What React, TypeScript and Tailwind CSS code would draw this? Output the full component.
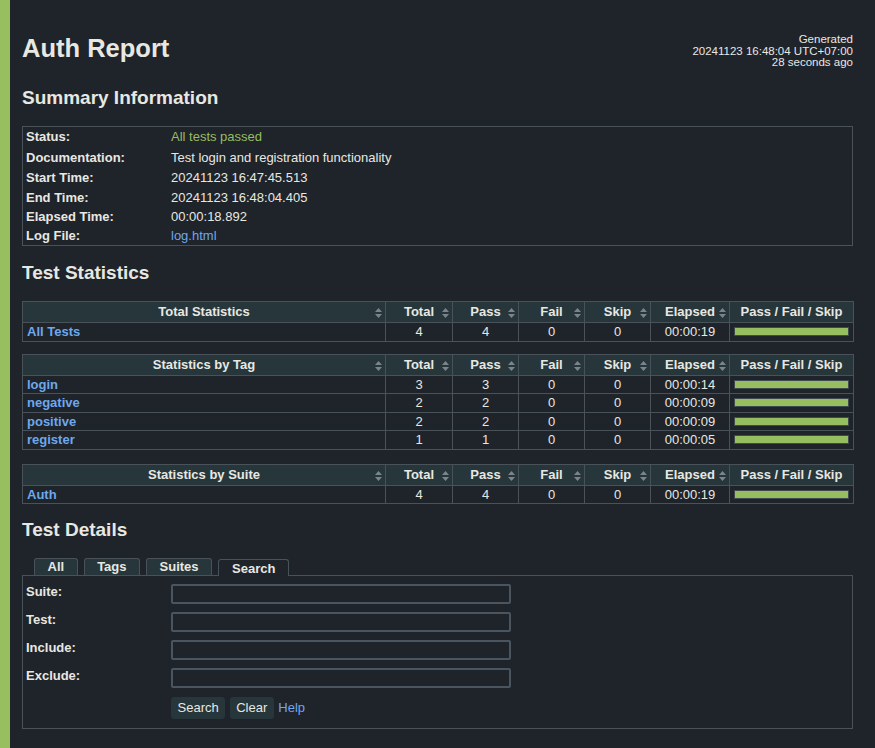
import React from 'react';

type Row = { name: string; total: number; pass: number; fail: number; skip: number; elapsed: string };

const SortIcon = () => (
  <svg width="7" height="10" viewBox="0 0 7 10" className="absolute right-[3px] top-[6px]">
    <path d="M0 4 L3.5 0 L7 4 Z" fill="#7b848c" />
    <path d="M0 6 L7 6 L3.5 10 Z" fill="#7b848c" />
  </svg>
);

const StatTable = ({ title, rows, className }: { title: string; rows: Row[]; className?: string }) => {
  const th = 'relative p-0 border border-[#4a5259] bg-[#26363b] text-center font-bold leading-[20px]';
  const td = 'p-0 border border-[#4a5259] text-center leading-[17.5px]';
  return (
    <table className={'w-full table-fixed border-collapse text-[13px] ' + (className || '')}>
      <colgroup>
        <col className="w-[363px]" />
        <col className="w-[67px]" />
        <col className="w-[66px]" />
        <col className="w-[66px]" />
        <col className="w-[66px]" />
        <col className="w-[79px]" />
        <col className="w-[124px]" />
      </colgroup>
      <thead>
        <tr>
          <th className={th}>{title}<SortIcon /></th>
          <th className={th}>Total<SortIcon /></th>
          <th className={th}>Pass<SortIcon /></th>
          <th className={th}>Fail<SortIcon /></th>
          <th className={th}>Skip<SortIcon /></th>
          <th className={th}>Elapsed<SortIcon /></th>
          <th className={th}>Pass / Fail / Skip</th>
        </tr>
      </thead>
      <tbody>
        {rows.map((r) => (
          <tr key={r.name}>
            <td className="p-0 pl-[4px] border border-[#4a5259] text-left font-bold leading-[17.5px] text-[#6ea8ec]">
              {r.name}
            </td>
            <td className={td}>{r.total}</td>
            <td className={td}>{r.pass}</td>
            <td className={td}>{r.fail}</td>
            <td className={td}>{r.skip}</td>
            <td className={td}>{r.elapsed}</td>
            <td className="p-0 px-[4px] border border-[#4a5259]">
              <div className="h-[9px] border border-[#3e4a50] bg-[#97bd61]" />
            </td>
          </tr>
        ))}
      </tbody>
    </table>
  );
};

const summary: [string, React.ReactNode, string][] = [
  ['Status:', <span className="text-[#97bd61]">All tests passed</span>, 'h-[20px]'],
  ['Documentation:', 'Test login and registration functionality', 'h-[21px]'],
  ['Start Time:', '20241123 16:47:45.513', 'h-[20px]'],
  ['End Time:', '20241123 16:48:04.405', 'h-[19px]'],
  ['Elapsed Time:', '00:00:18.892', 'h-[19px]'],
  ['Log File:', <span className="text-[#6ea8ec]">log.html</span>, 'h-[19px]'],
];

const tags: Row[] = [
  { name: 'login', total: 3, pass: 3, fail: 0, skip: 0, elapsed: '00:00:14' },
  { name: 'negative', total: 2, pass: 2, fail: 0, skip: 0, elapsed: '00:00:09' },
  { name: 'positive', total: 2, pass: 2, fail: 0, skip: 0, elapsed: '00:00:09' },
  { name: 'register', total: 1, pass: 1, fail: 0, skip: 0, elapsed: '00:00:05' },
];

export default function App() {
  return (
    <div className="min-h-screen border-l-[10px] border-[#97bf60] bg-[#1f232a] pl-[12px] pr-[22px] pb-[20px] font-['Liberation_Sans',Arial,sans-serif] text-[13px] text-[#e8e8e2]">
      {/* header */}
      <div className="flex h-[69px] items-start justify-between pt-[33px]">
        <h1 className="text-[25.5px] font-bold leading-[30px]">Auth Report</h1>
        <div className="mt-[1px] text-right text-[11.5px] leading-[11.5px]">
          Generated
          <br />
          20241123 16:48:04 UTC+07:00
          <br />
          28 seconds ago
        </div>
      </div>

      <h2 className="mt-[17px] text-[19px] font-bold leading-[24px]">Summary Information</h2>
      <div className="mt-[16px] border border-[#4a5259] pl-[3px]">
        {summary.map(([label, value, h]) => (
          <div key={label} className={'grid grid-cols-[145px_1fr] items-center ' + h}>
            <div className="font-bold">{label}</div>
            <div>{value}</div>
          </div>
        ))}
      </div>

      <h2 className="mt-[15px] text-[19px] font-bold leading-[24px]">Test Statistics</h2>
      <StatTable
        className="mt-[16px]"
        title="Total Statistics"
        rows={[{ name: 'All Tests', total: 4, pass: 4, fail: 0, skip: 0, elapsed: '00:00:19' }]}
      />
      <StatTable className="mt-[12px]" title="Statistics by Tag" rows={tags} />
      <StatTable
        className="mt-[14px]"
        title="Statistics by Suite"
        rows={[{ name: 'Auth', total: 4, pass: 4, fail: 0, skip: 0, elapsed: '00:00:19' }]}
      />

      <h2 className="mt-[14px] text-[19px] font-bold leading-[24px]">Test Details</h2>

      {/* tabs */}
      <div className="relative z-10 mt-[16px] -mb-px flex items-end gap-[6px] pl-[12px] font-bold leading-[15px]">
        {['All', 'Tags', 'Suites'].map((t) => (
          <div key={t} className="mb-px h-[17px] rounded-t-[3px] border-x border-t border-[#4a5259] bg-[#26363b] px-[12.5px]">
            {t}
          </div>
        ))}
        <div className="h-[17px] rounded-t-[3px] border-x border-t border-[#4a5259] bg-[#1f232a] px-[13px] pt-px">
          Search
        </div>
      </div>
      <div className="border border-[#4a5259] px-[3px] pb-[9px] pt-[8px]">
        <div className="grid grid-cols-[145px_340px] gap-y-[8px]">
          {['Suite:', 'Test:', 'Include:', 'Exclude:'].map((l) => (
            <React.Fragment key={l}>
              <div className="font-bold leading-[15px]">{l}</div>
              <input className="h-[20px] rounded-[2px] border-2 border-[#4a5560] bg-transparent outline-none" />
            </React.Fragment>
          ))}
          <div />
          <div className="mt-px flex items-center gap-[4.5px]">
            <button className="h-[22px] rounded-[3px] bg-[#26363b] px-[6.5px]">Search</button>
            <button className="h-[22px] rounded-[3px] bg-[#26363b] px-[6.5px]">Clear</button>
            <span className="text-[#6ea8ec]">Help</span>
          </div>
        </div>
      </div>
    </div>
  );
}
